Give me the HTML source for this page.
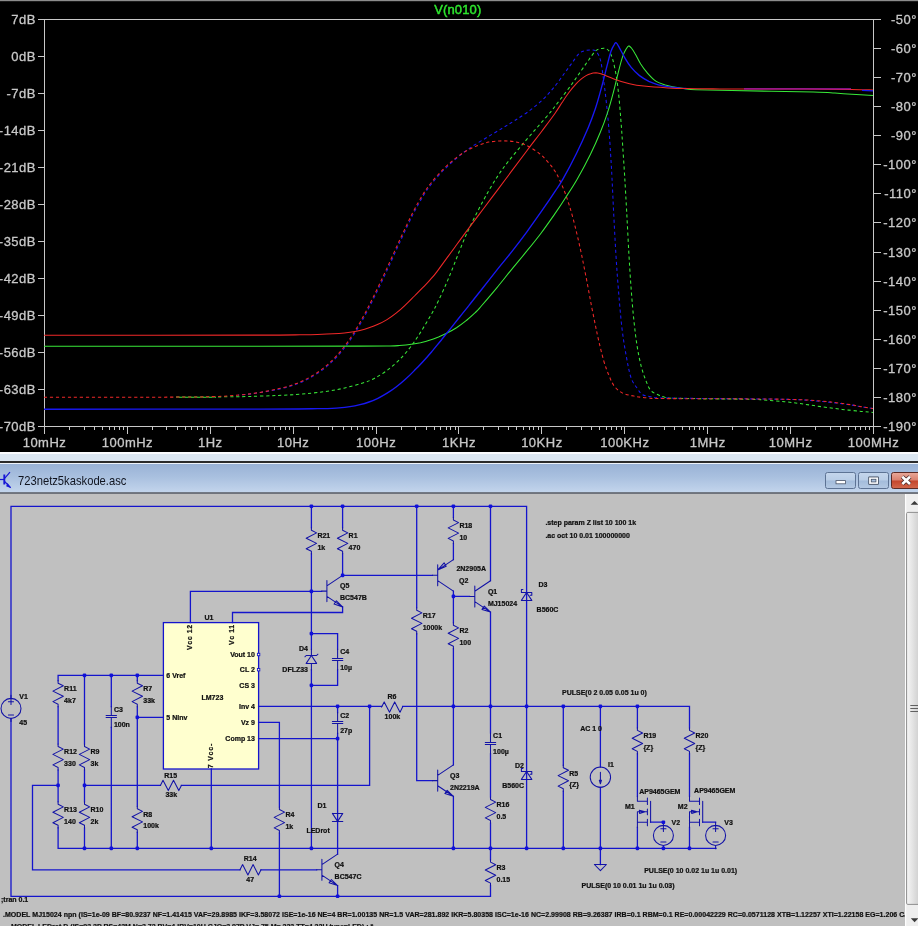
<!DOCTYPE html>
<html><head><meta charset="utf-8"><title>LTspice</title>
<style>html,body{margin:0;padding:0;background:#000;}body{width:918px;height:926px;overflow:hidden;font-family:"Liberation Sans", sans-serif;}svg{display:block;will-change:transform}</style></head>
<body>
<svg width="918" height="926" viewBox="0 0 918 926">
<rect x="0" y="0" width="918" height="452" fill="#000"/>
<rect x="0" y="0" width="918" height="1.2" fill="#8c8c8c"/>
<g stroke="#c8c8c8" stroke-width="1" fill="none" shape-rendering="crispEdges">
<path d="M38 19.5 H881"/>
<path d="M44.5 19.5 V426.5"/>
<path d="M873.5 19.5 V426.5"/>
<path d="M38 426.5 H881"/>
<path d="M38 19.5 H44.5"/>
<path d="M38 56.5 H44.5"/>
<path d="M38 93.5 H44.5"/>
<path d="M38 130.5 H44.5"/>
<path d="M38 167.5 H44.5"/>
<path d="M38 204.5 H44.5"/>
<path d="M38 241.5 H44.5"/>
<path d="M38 278.5 H44.5"/>
<path d="M38 315.5 H44.5"/>
<path d="M38 352.5 H44.5"/>
<path d="M38 389.5 H44.5"/>
<path d="M38 426.5 H44.5"/>
<path d="M873.5 19.5 H881"/>
<path d="M873.5 48.5 H881"/>
<path d="M873.5 77.5 H881"/>
<path d="M873.5 106.5 H881"/>
<path d="M873.5 135.5 H881"/>
<path d="M873.5 164.5 H881"/>
<path d="M873.5 193.5 H881"/>
<path d="M873.5 222.5 H881"/>
<path d="M873.5 252.5 H881"/>
<path d="M873.5 281.5 H881"/>
<path d="M873.5 310.5 H881"/>
<path d="M873.5 339.5 H881"/>
<path d="M873.5 368.5 H881"/>
<path d="M873.5 397.5 H881"/>
<path d="M873.5 426.5 H881"/>
<path d="M44.5 426.5 V433.5"/>
<path d="M69.5 426.5 V429.5"/>
<path d="M84.5 426.5 V429.5"/>
<path d="M94.5 426.5 V429.5"/>
<path d="M102.5 426.5 V429.5"/>
<path d="M109.5 426.5 V429.5"/>
<path d="M114.5 426.5 V429.5"/>
<path d="M119.5 426.5 V429.5"/>
<path d="M123.5 426.5 V429.5"/>
<path d="M127.5 426.5 V433.5"/>
<path d="M152.5 426.5 V429.5"/>
<path d="M166.5 426.5 V429.5"/>
<path d="M177.5 426.5 V429.5"/>
<path d="M185.5 426.5 V429.5"/>
<path d="M191.5 426.5 V429.5"/>
<path d="M197.5 426.5 V429.5"/>
<path d="M202.5 426.5 V429.5"/>
<path d="M206.5 426.5 V429.5"/>
<path d="M210.5 426.5 V433.5"/>
<path d="M235.5 426.5 V429.5"/>
<path d="M249.5 426.5 V429.5"/>
<path d="M260.5 426.5 V429.5"/>
<path d="M268.5 426.5 V429.5"/>
<path d="M274.5 426.5 V429.5"/>
<path d="M280.5 426.5 V429.5"/>
<path d="M285.5 426.5 V429.5"/>
<path d="M289.5 426.5 V429.5"/>
<path d="M293.5 426.5 V433.5"/>
<path d="M318.5 426.5 V429.5"/>
<path d="M332.5 426.5 V429.5"/>
<path d="M343.5 426.5 V429.5"/>
<path d="M351.5 426.5 V429.5"/>
<path d="M357.5 426.5 V429.5"/>
<path d="M363.5 426.5 V429.5"/>
<path d="M368.5 426.5 V429.5"/>
<path d="M372.5 426.5 V429.5"/>
<path d="M376.5 426.5 V433.5"/>
<path d="M401.5 426.5 V429.5"/>
<path d="M415.5 426.5 V429.5"/>
<path d="M426.5 426.5 V429.5"/>
<path d="M434.5 426.5 V429.5"/>
<path d="M440.5 426.5 V429.5"/>
<path d="M446.5 426.5 V429.5"/>
<path d="M450.5 426.5 V429.5"/>
<path d="M455.5 426.5 V429.5"/>
<path d="M458.5 426.5 V433.5"/>
<path d="M483.5 426.5 V429.5"/>
<path d="M498.5 426.5 V429.5"/>
<path d="M508.5 426.5 V429.5"/>
<path d="M516.5 426.5 V429.5"/>
<path d="M523.5 426.5 V429.5"/>
<path d="M529.5 426.5 V429.5"/>
<path d="M533.5 426.5 V429.5"/>
<path d="M538.5 426.5 V429.5"/>
<path d="M541.5 426.5 V433.5"/>
<path d="M566.5 426.5 V429.5"/>
<path d="M581.5 426.5 V429.5"/>
<path d="M591.5 426.5 V429.5"/>
<path d="M599.5 426.5 V429.5"/>
<path d="M606.5 426.5 V429.5"/>
<path d="M611.5 426.5 V429.5"/>
<path d="M616.5 426.5 V429.5"/>
<path d="M621.5 426.5 V429.5"/>
<path d="M624.5 426.5 V433.5"/>
<path d="M649.5 426.5 V429.5"/>
<path d="M664.5 426.5 V429.5"/>
<path d="M674.5 426.5 V429.5"/>
<path d="M682.5 426.5 V429.5"/>
<path d="M689.5 426.5 V429.5"/>
<path d="M694.5 426.5 V429.5"/>
<path d="M699.5 426.5 V429.5"/>
<path d="M703.5 426.5 V429.5"/>
<path d="M707.5 426.5 V433.5"/>
<path d="M732.5 426.5 V429.5"/>
<path d="M747.5 426.5 V429.5"/>
<path d="M757.5 426.5 V429.5"/>
<path d="M765.5 426.5 V429.5"/>
<path d="M772.5 426.5 V429.5"/>
<path d="M777.5 426.5 V429.5"/>
<path d="M782.5 426.5 V429.5"/>
<path d="M786.5 426.5 V429.5"/>
<path d="M790.5 426.5 V433.5"/>
<path d="M815.5 426.5 V429.5"/>
<path d="M830.5 426.5 V429.5"/>
<path d="M840.5 426.5 V429.5"/>
<path d="M848.5 426.5 V429.5"/>
<path d="M855.5 426.5 V429.5"/>
<path d="M860.5 426.5 V429.5"/>
<path d="M865.5 426.5 V429.5"/>
<path d="M869.5 426.5 V429.5"/>
<path d="M873.5 426.5 V433.5"/>
</g>
<g font-family='"Liberation Sans", sans-serif' font-size="13px" fill="#c8c8c8" stroke="#c8c8c8" stroke-width="0.3" letter-spacing="0.5" opacity="0.999">
<text x="36" y="24.2" text-anchor="end">7dB</text>
<text x="36" y="61.2" text-anchor="end">0dB</text>
<text x="36" y="98.2" text-anchor="end">-7dB</text>
<text x="36" y="135.2" text-anchor="end">-14dB</text>
<text x="36" y="172.2" text-anchor="end">-21dB</text>
<text x="36" y="209.2" text-anchor="end">-28dB</text>
<text x="36" y="246.2" text-anchor="end">-35dB</text>
<text x="36" y="283.2" text-anchor="end">-42dB</text>
<text x="36" y="320.2" text-anchor="end">-49dB</text>
<text x="36" y="357.2" text-anchor="end">-56dB</text>
<text x="36" y="394.2" text-anchor="end">-63dB</text>
<text x="36" y="431.2" text-anchor="end">-70dB</text>
<text x="917" y="24.2" text-anchor="end">-50&#176;</text>
<text x="917" y="53.2" text-anchor="end">-60&#176;</text>
<text x="917" y="82.2" text-anchor="end">-70&#176;</text>
<text x="917" y="111.2" text-anchor="end">-80&#176;</text>
<text x="917" y="140.2" text-anchor="end">-90&#176;</text>
<text x="917" y="169.2" text-anchor="end">-100&#176;</text>
<text x="917" y="198.2" text-anchor="end">-110&#176;</text>
<text x="917" y="227.2" text-anchor="end">-120&#176;</text>
<text x="917" y="257.2" text-anchor="end">-130&#176;</text>
<text x="917" y="286.2" text-anchor="end">-140&#176;</text>
<text x="917" y="315.2" text-anchor="end">-150&#176;</text>
<text x="917" y="344.2" text-anchor="end">-160&#176;</text>
<text x="917" y="373.2" text-anchor="end">-170&#176;</text>
<text x="917" y="402.2" text-anchor="end">-180&#176;</text>
<text x="917" y="431.2" text-anchor="end">-190&#176;</text>
<text x="44.5" y="446.6" text-anchor="middle">10mHz</text>
<text x="127.4" y="446.6" text-anchor="middle">100mHz</text>
<text x="210.3" y="446.6" text-anchor="middle">1Hz</text>
<text x="293.2" y="446.6" text-anchor="middle">10Hz</text>
<text x="376.1" y="446.6" text-anchor="middle">100Hz</text>
<text x="459.0" y="446.6" text-anchor="middle">1KHz</text>
<text x="541.9" y="446.6" text-anchor="middle">10KHz</text>
<text x="624.8" y="446.6" text-anchor="middle">100KHz</text>
<text x="707.7" y="446.6" text-anchor="middle">1MHz</text>
<text x="790.6" y="446.6" text-anchor="middle">10MHz</text>
<text x="873.5" y="446.6" text-anchor="middle">100MHz</text>
</g>
<text x="457.8" y="13.8" text-anchor="middle" font-family='"Liberation Sans", sans-serif' font-size="13px" fill="#2ee62e" stroke="#2ee62e" stroke-width="0.45" letter-spacing="0.12" opacity="0.999">V(n010)</text>
<g fill="none" stroke-width="1.05" stroke-linejoin="round">
<defs><clipPath id="cg"><rect x="175" y="0" width="743" height="452"/></clipPath><clipPath id="cb"><rect x="238" y="0" width="680" height="452"/></clipPath></defs>
<path d="M44.0 397.3C72.5 397.2 179.0 397.1 215.0 396.9C251.0 396.7 246.5 396.5 260.0 396.1C273.5 395.7 285.2 395.2 296.0 394.5C306.7 393.7 316.6 392.7 324.6 391.6C332.6 390.6 337.4 389.6 343.8 388.2C350.2 386.7 357.7 384.7 362.8 383.0C368.0 381.4 370.7 380.3 374.7 378.2C378.7 376.1 382.9 373.5 386.9 370.5C390.9 367.5 395.0 364.1 398.8 360.4C402.5 356.7 406.4 352.3 409.4 348.4C412.5 344.6 414.7 341.2 417.3 337.3C419.9 333.5 422.4 329.4 424.9 325.2C427.4 321.1 430.1 316.5 432.4 312.4C434.6 308.4 436.0 305.8 438.3 301.1C440.6 296.3 443.9 289.0 446.1 284.0C448.3 279.0 448.7 277.9 451.5 271.1C454.2 264.3 459.6 250.4 462.6 243.2C465.6 235.9 466.8 233.3 469.6 227.5C472.3 221.7 476.0 214.5 479.2 208.3C482.4 202.1 485.7 196.0 488.9 190.5C492.1 184.9 495.3 179.7 498.5 174.9C501.7 170.1 504.1 166.8 508.0 161.8C512.0 156.7 517.4 150.4 522.2 144.7C526.9 139.1 531.9 133.5 536.6 128.1C541.3 122.6 547.0 116.3 550.5 112.1C554.0 107.9 554.2 107.4 557.7 102.8C561.2 98.2 567.6 89.9 571.6 84.5C575.5 79.0 578.6 74.4 581.5 70.3C584.4 66.2 586.5 62.9 588.9 59.7C591.3 56.4 593.7 52.6 595.9 50.7C598.1 48.8 600.2 48.8 602.0 48.4C603.7 48.1 605.0 48.3 606.2 48.8C607.5 49.4 608.3 49.7 609.5 51.7C610.6 53.7 612.0 56.6 613.1 60.9C614.3 65.2 615.6 71.6 616.5 77.6C617.5 83.5 618.1 89.5 618.9 96.7C619.6 103.9 620.3 112.6 620.9 120.6C621.6 128.6 622.0 135.5 622.6 144.6C623.2 153.7 623.9 163.8 624.6 175.0C625.2 186.3 626.0 198.9 626.7 212.1C627.4 225.3 628.2 241.1 628.9 254.2C629.7 267.3 630.4 279.4 631.3 290.6C632.1 301.8 633.0 312.1 634.0 321.5C635.0 330.8 636.0 339.2 637.2 346.7C638.4 354.2 639.8 360.7 641.2 366.3C642.7 371.9 644.1 376.1 645.7 380.1C647.3 384.1 648.6 387.9 650.6 390.3C652.6 392.7 655.6 393.6 658.0 394.8C660.3 395.9 661.9 396.6 664.8 397.2C667.8 397.7 661.7 397.9 675.9 398.3C690.1 398.6 735.5 399.0 750.0 399.3C764.5 399.6 757.2 399.5 763.0 399.9C768.8 400.3 777.8 401.0 784.6 401.7C791.4 402.4 797.4 403.2 803.8 404.1C810.2 405.0 816.6 406.0 823.0 406.9C829.4 407.8 835.7 408.6 842.1 409.4C848.5 410.1 856.2 410.9 861.3 411.4C866.5 411.9 871.1 412.3 873.0 412.5" stroke="#38e838" stroke-dasharray="3.2 2.8" clip-path="url(#cg)"/>
<path d="M176 397.3H216" stroke="#38e838" stroke-dasharray="3.2 2.8" stroke-dashoffset="3"/>
<path d="M700 398.8H741" stroke="#38e838" stroke-dasharray="3.2 2.8" stroke-dashoffset="3"/>
<path d="M44.0 397.3C65.8 397.3 146.5 397.3 175.0 397.1C203.5 397.0 204.1 396.9 215.0 396.5C225.8 396.2 232.5 395.7 240.0 395.0C247.6 394.4 253.8 393.6 260.4 392.5C267.1 391.5 273.9 390.3 280.0 388.9C286.0 387.5 291.6 386.0 296.7 384.0C301.9 382.1 306.2 380.1 310.9 377.4C315.7 374.7 320.8 371.3 325.2 367.8C329.5 364.3 333.2 360.9 337.2 356.5C341.2 352.2 345.1 347.4 349.1 341.8C353.1 336.1 357.0 329.8 361.0 322.7C365.1 315.6 369.2 307.6 373.4 299.0C377.7 290.5 382.0 281.3 386.6 271.4C391.2 261.5 396.5 249.4 401.0 239.7C405.5 230.1 409.6 221.1 413.4 213.6C417.3 206.0 421.0 199.6 424.1 194.5C427.3 189.3 429.2 186.7 432.6 182.6C435.9 178.4 440.4 173.4 444.4 169.4C448.3 165.4 452.7 161.5 456.2 158.5C459.7 155.4 462.4 153.4 465.4 151.1C468.5 148.9 470.8 147.4 474.6 144.9C478.5 142.5 483.9 139.2 488.6 136.4C493.3 133.5 498.6 130.5 502.9 127.9C507.2 125.2 510.2 123.4 514.5 120.7C518.7 118.0 523.6 115.1 528.3 111.6C533.0 108.1 538.2 103.9 542.6 99.8C546.9 95.6 550.8 91.2 554.5 86.7C558.3 82.2 561.9 76.7 564.8 72.8C567.7 68.9 569.5 66.3 571.9 63.1C574.3 59.9 576.9 55.6 579.1 53.5C581.3 51.4 583.3 51.3 585.3 50.7C587.3 50.1 589.2 49.9 591.0 50.0C592.8 50.1 594.3 49.4 595.9 51.2C597.5 53.0 599.3 55.5 600.6 60.7C601.9 65.9 602.9 75.1 603.9 82.3C604.9 89.5 605.7 96.3 606.5 103.9C607.3 111.5 608.1 119.4 608.8 127.8C609.5 136.2 610.1 145.8 610.6 154.2C611.2 162.6 611.5 168.6 612.0 178.2C612.5 187.9 613.0 199.4 613.6 212.1C614.3 224.8 615.1 241.1 615.9 254.2C616.7 267.3 617.5 278.5 618.5 290.6C619.5 302.7 620.6 316.3 621.8 327.0C623.1 337.8 624.5 346.6 626.1 355.1C627.6 363.5 629.1 372.0 631.0 377.6C632.9 383.2 635.4 385.6 637.3 388.4C639.1 391.3 640.0 393.1 642.2 394.5C644.4 395.9 647.0 396.1 650.7 396.7C654.5 397.3 646.5 397.7 664.7 398.0C683.0 398.4 739.2 398.7 760.0 399.0C780.8 399.2 781.3 399.2 789.4 399.4C797.5 399.6 801.4 399.8 808.6 400.3C815.8 400.9 825.3 401.8 832.5 402.6C839.7 403.4 846.8 404.4 851.6 405.1C856.4 405.8 857.8 406.2 861.4 406.8C864.9 407.4 871.1 408.2 873.0 408.5" stroke="#1818f4" stroke-dasharray="3.2 2.8" clip-path="url(#cb)"/>
<path d="M44.0 397.3C65.8 397.3 146.5 397.3 175.0 397.1C203.5 397.0 204.2 396.9 215.0 396.5C225.8 396.2 232.5 395.7 240.0 395.0C247.4 394.3 253.4 393.5 260.0 392.4C266.5 391.3 273.1 390.1 279.1 388.6C285.1 387.2 290.6 385.7 295.7 383.7C300.9 381.8 305.2 379.8 309.9 377.1C314.7 374.4 319.8 371.0 324.2 367.5C328.5 364.0 332.2 360.6 336.2 356.2C340.2 351.9 344.1 347.1 348.1 341.5C352.1 335.8 356.0 329.5 360.0 322.4C364.1 315.3 368.2 307.3 372.4 298.7C376.7 290.2 381.0 281.0 385.6 271.1C390.2 261.2 395.5 249.1 400.0 239.4C404.5 229.8 408.6 220.8 412.4 213.3C416.3 205.7 420.0 199.3 423.1 194.2C426.3 189.0 428.2 186.4 431.6 182.3C434.9 178.1 439.4 173.1 443.4 169.1C447.3 165.1 451.4 161.5 455.4 158.4C459.4 155.2 463.5 152.5 467.4 150.3C471.4 148.0 475.5 146.3 479.1 145.0C482.7 143.6 485.3 142.8 488.7 142.1C492.2 141.5 496.5 141.1 500.0 140.9C503.5 140.8 507.1 140.9 510.0 141.1C512.8 141.3 514.9 141.7 517.2 142.2C519.5 142.7 521.9 143.5 523.9 144.3C525.9 145.1 527.2 145.7 529.2 146.8C531.2 147.9 533.8 149.5 535.8 150.9C537.8 152.2 539.5 153.6 541.1 155.0C542.7 156.4 543.8 157.4 545.4 159.1C547.0 160.8 549.2 163.4 550.8 165.3C552.3 167.2 553.3 168.5 554.7 170.8C556.1 173.1 557.3 174.9 559.2 179.0C561.1 183.1 563.7 189.0 566.0 195.5C568.3 202.0 570.5 209.0 572.9 217.9C575.3 226.7 578.1 238.9 580.3 248.7C582.4 258.4 584.0 266.8 586.0 276.6C587.9 286.4 589.9 297.7 591.8 307.5C593.8 317.3 595.6 326.6 597.5 335.4C599.5 344.3 601.8 353.8 603.7 360.6C605.6 367.3 607.4 371.7 609.2 375.9C610.9 380.2 612.0 383.1 614.2 386.0C616.4 388.9 619.3 391.4 622.6 393.1C625.9 394.8 629.7 395.3 633.9 396.1C638.1 396.9 642.7 397.5 647.8 397.9C653.0 398.4 646.0 398.4 664.7 398.6C683.4 398.7 739.2 398.8 760.0 399.0C780.8 399.1 781.3 399.2 789.4 399.4C797.5 399.6 802.2 399.8 808.6 400.1C815.0 400.5 823.7 401.2 827.7 401.5C831.6 401.9 828.5 401.6 832.5 402.2C836.5 402.7 846.8 404.1 851.6 404.8C856.4 405.6 857.8 406.1 861.4 406.7C864.9 407.3 871.1 408.2 873.0 408.5" stroke="#f02828" stroke-dasharray="3.2 2.8"/>
<path d="M44.0 346.2C80.0 346.2 207.3 346.2 260.0 346.2C312.7 346.1 338.3 346.1 360.0 346.1C381.7 346.0 383.4 346.0 390.0 345.9C396.5 345.8 395.7 345.8 399.3 345.5C402.8 345.2 407.8 344.7 411.4 344.2C414.9 343.7 417.4 343.3 420.5 342.7C423.5 342.0 426.4 341.3 429.4 340.3C432.4 339.4 435.5 338.2 438.5 337.0C441.5 335.7 444.6 334.3 447.6 332.8C450.6 331.3 453.5 329.7 456.5 327.8C459.5 325.8 462.4 323.7 465.5 321.2C468.6 318.8 472.5 315.1 474.9 312.9C477.2 310.6 476.1 312.0 479.8 307.8C483.4 303.6 491.5 294.2 496.8 287.8C502.1 281.4 506.5 275.7 511.5 269.6C516.5 263.5 521.8 257.3 526.7 251.2C531.6 245.2 536.2 239.6 541.0 233.2C545.8 226.8 551.3 218.9 555.5 212.9C559.7 206.8 562.4 202.7 566.0 197.0C569.7 191.4 573.2 186.2 577.3 179.0C581.4 171.9 586.8 161.7 590.6 154.0C594.4 146.2 597.5 139.2 600.2 132.5C603.0 125.7 605.1 120.1 607.3 113.3C609.5 106.6 611.6 99.0 613.5 91.8C615.4 84.7 617.2 76.3 618.8 70.3C620.3 64.4 621.5 59.7 622.8 56.1C624.0 52.5 625.3 50.4 626.3 48.7C627.3 47.0 627.9 46.0 628.7 45.9C629.5 45.8 630.3 46.8 631.4 48.0C632.4 49.3 633.6 51.0 635.1 53.7C636.7 56.3 638.8 60.9 640.7 64.0C642.7 67.1 644.2 69.4 646.7 72.2C649.3 75.1 652.7 79.0 655.8 81.1C658.9 83.2 662.6 83.9 665.4 84.9C668.2 85.8 669.5 86.2 672.6 86.8C675.7 87.4 680.1 88.2 684.0 88.6C687.9 89.1 688.1 89.4 696.0 89.7C704.0 90.0 712.3 90.2 731.9 90.6C751.5 91.0 796.2 91.6 813.4 92.0C830.5 92.4 828.5 92.7 834.9 93.1C841.3 93.5 845.4 93.8 851.7 94.2C858.1 94.6 869.5 95.3 873.0 95.5" stroke="#38e838"/>
<path d="M44.0 409.2C80.0 409.2 214.4 409.2 260.0 409.1C305.6 409.0 304.3 408.9 317.5 408.7C330.7 408.5 333.6 408.2 339.0 407.9C344.4 407.5 346.5 407.2 350.0 406.6C353.5 406.1 356.8 405.4 360.0 404.6C363.1 403.9 366.0 403.1 369.0 402.0C372.0 401.0 374.9 399.8 377.9 398.3C381.0 396.8 384.0 395.1 387.1 393.2C390.1 391.3 393.1 389.3 396.1 387.0C399.1 384.7 402.1 382.2 405.1 379.5C408.2 376.8 411.3 373.7 414.3 370.6C417.4 367.6 420.3 364.5 423.3 361.2C426.3 358.0 429.3 354.5 432.4 350.9C435.4 347.3 438.5 343.4 441.6 339.7C444.6 335.9 447.7 332.2 450.7 328.4C453.7 324.6 456.7 320.8 459.7 317.0C462.7 313.2 465.4 309.9 468.8 305.7C472.1 301.4 475.2 297.5 480.0 291.5C484.7 285.5 491.9 276.3 497.2 269.6C502.6 262.9 507.3 257.4 512.2 251.2C517.1 244.9 521.9 238.6 526.7 232.1C531.5 225.5 536.3 218.7 541.2 211.7C546.0 204.8 552.1 195.8 555.7 190.3C559.4 184.9 559.5 185.1 562.9 179.1C566.4 173.0 572.0 162.6 576.2 154.0C580.5 145.4 585.1 135.2 588.3 127.6C591.4 120.0 593.1 115.3 595.4 108.5C597.6 101.8 599.8 93.8 601.6 87.1C603.5 80.3 605.0 73.8 606.5 67.9C608.1 61.9 609.6 55.4 610.9 51.5C612.2 47.6 613.4 45.9 614.3 44.5C615.2 43.0 615.3 42.2 616.2 42.8C617.1 43.4 618.0 45.3 619.4 47.8C620.9 50.4 623.0 54.8 625.0 58.1C626.9 61.4 628.8 64.5 631.2 67.4C633.6 70.3 636.6 73.3 639.5 75.6C642.5 77.9 645.7 79.7 648.8 81.3C652.0 82.8 655.2 83.9 658.3 84.8C661.5 85.7 664.1 86.2 667.8 86.7C671.4 87.3 676.8 87.7 680.0 88.1C683.2 88.4 685.8 88.5 687.0 88.6" stroke="#1818f4" stroke-width="1.35"/>
<path d="M44.0 335.3C80.0 335.3 217.3 335.2 260.0 335.1C302.7 335.0 290.4 334.9 300.0 334.8C309.6 334.7 311.0 334.7 317.5 334.5C324.0 334.2 333.6 333.7 339.0 333.4C344.4 333.0 346.5 332.7 350.0 332.2C353.5 331.7 356.8 331.1 359.9 330.4C363.1 329.7 366.0 328.9 369.0 327.8C372.0 326.8 375.0 325.7 378.0 324.3C381.0 323.0 383.9 321.5 387.0 319.6C390.0 317.8 393.1 315.6 396.1 313.2C399.1 310.9 402.0 308.3 405.0 305.4C408.1 302.6 411.4 299.1 414.5 296.0C417.5 292.9 420.9 289.5 423.5 286.8C426.1 284.1 427.9 282.4 430.1 279.8C432.4 277.3 432.8 277.2 437.0 271.6C441.1 266.1 449.7 254.1 455.2 246.7C460.6 239.3 464.6 233.8 469.4 227.4C474.2 221.0 479.0 214.6 483.8 208.2C488.6 201.8 493.4 195.5 498.2 189.1C503.0 182.7 507.7 176.3 512.5 169.9C517.3 163.5 522.1 157.1 526.9 150.7C531.7 144.3 536.7 137.9 541.4 131.7C546.1 125.4 551.6 118.2 555.1 113.2C558.6 108.2 560.2 105.2 562.6 101.7C564.9 98.1 567.0 95.0 569.3 92.0C571.5 89.0 574.2 85.9 576.3 83.6C578.3 81.4 580.0 80.0 581.7 78.6C583.3 77.3 584.7 76.4 586.1 75.6C587.6 74.7 589.0 74.1 590.6 73.7C592.2 73.2 594.3 72.9 595.9 72.8C597.4 72.8 598.7 73.1 599.9 73.4C601.1 73.7 600.5 73.6 603.0 74.6C605.5 75.6 610.7 77.9 615.2 79.4C619.6 81.0 624.7 82.6 629.5 83.7C634.3 84.8 637.5 85.4 643.9 86.1C650.2 86.8 660.5 87.5 667.7 87.9C674.9 88.3 678.2 88.4 686.9 88.6C695.6 88.8 700.5 88.8 720.0 88.9C739.5 88.9 781.9 88.9 803.8 89.0C825.7 89.1 840.2 89.3 851.7 89.4C863.2 89.6 869.4 89.9 873.0 90.0" stroke="#f02828"/>
<path d="M862 90.3L873 90.8" stroke="#1818f4" stroke-width="1.3"/>
<path d="M744 88.9H851" stroke="#a018b0" stroke-width="1.3"/>
</g>
<rect x="0" y="452" width="918" height="2" fill="#fbfcfe"/>
<rect x="0" y="454" width="918" height="7" fill="#dce7f2"/>
<rect x="0" y="461" width="918" height="2" fill="#2b2b2b"/>
<rect x="0" y="463" width="918" height="1" fill="#eef3fa"/>
<defs><linearGradient id="tb" x1="0" y1="0" x2="0" y2="1"><stop offset="0" stop-color="#99b2d6"/><stop offset="0.45" stop-color="#a9c0df"/><stop offset="1" stop-color="#c3d5ec"/></linearGradient></defs>
<rect x="0" y="464" width="918" height="28.6" fill="url(#tb)"/>
<rect x="0" y="492.5" width="918" height="1.5" fill="#6f737b"/>
<rect x="0" y="494" width="918" height="432" fill="#c0c0c0"/>
<rect x="163.4" y="622.6" width="95.2" height="146.4" fill="#ffffcf" stroke="#1414cc" stroke-width="1.3"/>
<rect x="257.4" y="653.3" width="2.4" height="2.4" fill="#ffffcf" stroke="#1414cc" stroke-width="0.9"/>
<rect x="257.4" y="668.5" width="2.4" height="2.4" fill="#ffffcf" stroke="#1414cc" stroke-width="0.9"/>
<g fill="none" stroke="#1414cc" stroke-width="1.3" stroke-linecap="square" stroke-linejoin="miter">
<path d="M11.0 698.4L11.0 506.3L526.6 506.3M11.0 718.4L11.0 896.3L490.5 896.3M311.4 506.3L311.4 527.7M311.4 553.9L311.4 649.0M311.4 670.0L311.4 848.4M311.4 633.6L337.6 633.6L337.6 649.0M337.6 670.0L337.6 685.4L311.4 685.4M342.6 506.3L342.6 527.7M342.6 553.9L342.6 575.4M190.4 622.6L190.4 591.4L321.6 591.4M232.5 622.6L232.5 612.5L342.6 612.5L342.6 606.9M342.6 575.4L432.4 575.4M416.7 506.3L416.7 607.7M416.7 633.9L416.7 780.6L432.4 780.6M453.4 506.3L453.4 517.4M453.4 543.6L453.4 559.6M453.4 591.1L453.4 622.7M453.4 648.9L453.4 764.9M453.4 796.3L453.4 848.4M453.4 596.4L469.5 596.4M490.5 506.3L490.5 580.7M490.5 612.1L490.5 733.0M490.5 754.0L490.5 796.9M490.5 823.1L490.5 859.5M490.5 885.7L490.5 896.3M526.6 506.3L526.6 848.4M258.6 706.4L381.6 706.4M402.6 706.4L689.5 706.4M337.6 706.4L337.6 712.5M337.6 733.5L337.6 813.4M258.6 738.6L337.6 738.6M337.6 813.4L337.6 854.1M337.6 885.6L337.6 896.3M258.6 722.4L279.4 722.4L279.4 806.9M279.4 833.1L279.4 896.3M84.5 785.4L160.4 785.4M181.4 785.4L369.6 785.4L369.6 706.4M58.1 785.4L32.5 785.4L32.5 869.8L240.0 869.8M261.0 869.8L316.6 869.8M58.1 675.4L163.4 675.4M58.1 675.4L58.1 680.6M58.1 706.8L58.1 743.9M58.1 770.1L58.1 801.7M58.1 827.9L58.1 848.4M84.5 675.4L84.5 743.9M84.5 770.1L84.5 801.7M84.5 827.9L84.5 848.4M111.3 675.4L111.3 706.5M111.3 727.5L111.3 848.4M137.3 675.4L137.3 680.6M137.3 706.8L137.3 806.2M137.3 832.4L137.3 848.4M137.3 717.4L163.4 717.4M211.3 769.0L211.3 848.4M58.1 848.4L716.0 848.4M563.3 706.4L563.3 765.1M563.3 791.3L563.3 848.4M600.4 706.4L600.4 767.0M600.4 787.4L600.4 864.5M637.4 706.4L637.4 727.8M637.4 754.0L637.4 796.0M637.4 827.5L637.4 848.4M650.6 822.2L663.4 822.2M689.5 706.4L689.5 727.8M689.5 754.0L689.5 796.0M689.5 827.5L689.5 848.4M702.7 822.2L715.6 822.2M715.6 848.5L715.6 848.4"/>
</g>
<g fill="none" stroke="#1212a6" stroke-width="1.05" stroke-linecap="round" stroke-linejoin="round">
<path d="M11.0 708.4 m-10.00 0 a10.00 10.00 0 1 0 20.01 0 a10.00 10.00 0 1 0 -20.01 0M11.0 695.3L11.0 698.4M11.0 718.4L11.0 721.5M8.4 701.8L13.6 701.8M11.0 699.2L11.0 704.5M8.4 715.0L13.6 715.0M311.4 527.7L311.4 530.3L316.6 532.9L306.2 538.2L316.6 543.4L306.2 548.7L311.4 551.3L311.4 553.9M306.2 663.4L316.6 663.4L311.4 655.5L306.2 663.4M304.9 656.8L306.2 655.5L316.6 655.5L317.9 654.2M311.4 649.0L311.4 655.5M311.4 663.4L311.4 670.0M337.6 649.0L337.6 658.5M337.6 660.5L337.6 670.0M332.4 658.5L342.8 658.5M332.4 660.5L342.8 660.5M342.6 527.7L342.6 530.3L347.8 532.9L337.4 538.2L347.8 543.4L337.4 548.7L342.6 551.3L342.6 553.9M326.9 580.6L326.9 601.6M321.6 591.1L326.9 591.1M326.9 585.9L342.6 575.4M326.9 596.4L342.6 606.9M342.6 606.9L336.4 600.8L334.1 604.1L342.6 606.9M416.7 607.7L416.7 610.3L421.9 612.9L411.5 618.2L421.9 623.4L411.5 628.7L416.7 631.3L416.7 633.9M453.4 517.4L453.4 520.0L458.6 522.6L448.2 527.9L458.6 533.1L448.2 538.4L453.4 541.0L453.4 543.6M437.7 585.8L437.7 564.8M432.4 575.3L437.7 575.3M437.7 580.6L453.4 591.1M437.7 570.1L453.4 559.6M437.7 570.1L446.2 566.2L444.1 562.9L437.7 570.1M453.4 622.7L453.4 625.3L458.6 627.9L448.2 633.2L458.6 638.4L448.2 643.7L453.4 646.3L453.4 648.9M437.7 770.1L437.7 791.1M432.4 780.6L437.7 780.6M437.7 775.4L453.4 764.9M437.7 785.8L453.4 796.3M453.4 796.3L447.2 790.3L444.9 793.6L453.4 796.3M474.8 585.9L474.8 606.9M469.5 596.4L474.8 596.4M474.8 591.2L490.5 580.7M474.8 601.6L490.5 612.1M490.5 612.1L484.3 606.1L482.0 609.4L490.5 612.1M490.5 733.0L490.5 742.5M490.5 744.5L490.5 754.0M485.3 742.5L495.7 742.5M485.3 744.5L495.7 744.5M490.5 796.9L490.5 799.5L495.7 802.1L485.3 807.4L495.7 812.6L485.3 817.9L490.5 820.5L490.5 823.1M490.5 859.5L490.5 862.1L495.7 864.7L485.3 870.0L495.7 875.2L485.3 880.5L490.5 883.1L490.5 885.7M521.4 600.4L531.8 600.4L526.6 592.5L521.4 600.4M522.9 589.5L521.4 589.5L521.4 592.5L531.8 592.5L531.8 595.3L530.2 595.3M521.4 779.4L531.8 779.4L526.6 771.5L521.4 779.4M522.9 768.5L521.4 768.5L521.4 771.5L531.8 771.5L531.8 774.3L530.2 774.3M381.6 707.1L384.2 701.9L389.5 712.3L394.7 701.9L400.0 712.3L402.6 707.1M337.6 712.5L337.6 721.5M337.6 723.5L337.6 733.5M332.4 721.5L342.8 721.5M332.4 723.5L342.8 723.5M332.4 813.4L342.8 813.4L337.6 821.4L332.4 813.4M332.4 821.4L342.8 821.4M321.9 859.3L321.9 880.3M316.6 869.8L321.9 869.8M321.9 864.6L337.6 854.1M321.9 875.1L337.6 885.6M337.6 885.6L331.4 879.5L329.1 882.8L337.6 885.6M279.4 806.9L279.4 809.5L284.6 812.1L274.2 817.4L284.6 822.6L274.2 827.9L279.4 830.5L279.4 833.1M160.4 785.4L163.0 780.2L168.3 790.6L173.5 780.2L178.8 790.6L181.4 785.4M240.0 869.8L242.6 864.6L247.9 875.0L253.1 864.6L258.4 875.0L261.0 869.8M58.1 680.6L58.1 683.2L63.3 685.8L52.9 691.1L63.3 696.3L52.9 701.6L58.1 704.2L58.1 706.8M58.1 743.9L58.1 746.5L63.3 749.1L52.9 754.4L63.3 759.6L52.9 764.9L58.1 767.5L58.1 770.1M58.1 801.7L58.1 804.3L63.3 806.9L52.9 812.2L63.3 817.4L52.9 822.7L58.1 825.3L58.1 827.9M84.5 743.9L84.5 746.5L89.7 749.1L79.3 754.4L89.7 759.6L79.3 764.9L84.5 767.5L84.5 770.1M84.5 801.7L84.5 804.3L89.7 806.9L79.3 812.2L89.7 817.4L79.3 822.7L84.5 825.3L84.5 827.9M111.3 706.5L111.3 715.5M111.3 717.5L111.3 727.5M106.1 715.5L116.5 715.5M106.1 717.5L116.5 717.5M137.3 680.6L137.3 683.2L142.5 685.8L132.1 691.1L142.5 696.3L132.1 701.6L137.3 704.2L137.3 706.8M137.3 806.2L137.3 808.8L142.5 811.4L132.1 816.7L142.5 821.9L132.1 827.2L137.3 829.8L137.3 832.4M563.3 765.1L563.3 767.7L568.5 770.3L558.1 775.6L568.5 780.8L558.1 786.1L563.3 788.7L563.3 791.3M600.4 777.2 m-10.17 0 a10.17 10.17 0 1 0 20.34 0 a10.17 10.17 0 1 0 -20.34 0M600.4 772.2L600.4 783.6M599.3 780.2L600.4 783.8L601.5 780.2L599.3 780.2M594.4 864.5L606.4 864.5L600.4 870.6L594.4 864.5M637.4 727.8L637.4 730.4L642.6 733.0L632.2 738.3L642.6 743.5L632.2 748.8L637.4 751.4L637.4 754.0M637.4 796.0L637.4 801.2L647.4 801.2M647.4 798.0L647.4 804.5M647.4 809.1L647.4 814.7M647.4 819.3L647.4 825.8M650.6 801.2L650.6 822.2M637.4 811.7L637.4 827.5M637.4 822.2L647.4 822.2M637.4 811.7L647.4 811.7M645.0 811.7L639.4 810.2L639.6 813.5L645.0 811.7M663.4 835.4 m-10.00 0 a10.00 10.00 0 1 0 20.01 0 a10.00 10.00 0 1 0 -20.01 0M663.4 822.2L663.4 825.4M663.4 845.4L663.4 848.5M660.8 828.8L666.0 828.8M663.4 826.2L663.4 831.4M660.8 841.9L666.0 841.9M689.5 727.8L689.5 730.4L694.7 733.0L684.3 738.3L694.7 743.5L684.3 748.8L689.5 751.4L689.5 754.0M689.5 796.0L689.5 801.2L699.5 801.2M699.5 798.0L699.5 804.5M699.5 809.1L699.5 814.7M699.5 819.3L699.5 825.8M702.7 801.2L702.7 822.2M689.5 811.7L689.5 827.5M689.5 822.2L699.5 822.2M689.5 811.7L699.5 811.7M697.1 811.7L691.5 810.2L691.7 813.5L697.1 811.7M715.6 835.4 m-10.00 0 a10.00 10.00 0 1 0 20.01 0 a10.00 10.00 0 1 0 -20.01 0M715.6 822.2L715.6 825.4M715.6 845.4L715.6 848.5M713.0 828.8L718.2 828.8M715.6 826.2L715.6 831.4M713.0 841.9L718.2 841.9"/>
</g>
<g fill="#1010d8">
<rect x="309.6" y="631.8" width="3.6" height="3.6" rx="1.1"/>
<rect x="309.6" y="683.6" width="3.6" height="3.6" rx="1.1"/>
<rect x="309.6" y="504.5" width="3.6" height="3.6" rx="1.1"/>
<rect x="309.6" y="589.6" width="3.6" height="3.6" rx="1.1"/>
<rect x="309.6" y="846.6" width="3.6" height="3.6" rx="1.1"/>
<rect x="340.8" y="504.5" width="3.6" height="3.6" rx="1.1"/>
<rect x="340.8" y="573.6" width="3.6" height="3.6" rx="1.1"/>
<rect x="414.9" y="504.5" width="3.6" height="3.6" rx="1.1"/>
<rect x="451.6" y="504.5" width="3.6" height="3.6" rx="1.1"/>
<rect x="451.6" y="594.6" width="3.6" height="3.6" rx="1.1"/>
<rect x="451.6" y="704.6" width="3.6" height="3.6" rx="1.1"/>
<rect x="451.6" y="846.6" width="3.6" height="3.6" rx="1.1"/>
<rect x="488.7" y="504.5" width="3.6" height="3.6" rx="1.1"/>
<rect x="488.7" y="704.6" width="3.6" height="3.6" rx="1.1"/>
<rect x="488.7" y="846.6" width="3.6" height="3.6" rx="1.1"/>
<rect x="524.8" y="704.6" width="3.6" height="3.6" rx="1.1"/>
<rect x="524.8" y="846.6" width="3.6" height="3.6" rx="1.1"/>
<rect x="335.8" y="704.6" width="3.6" height="3.6" rx="1.1"/>
<rect x="367.8" y="704.6" width="3.6" height="3.6" rx="1.1"/>
<rect x="335.8" y="736.8" width="3.6" height="3.6" rx="1.1"/>
<rect x="335.8" y="894.5" width="3.6" height="3.6" rx="1.1"/>
<rect x="277.6" y="894.5" width="3.6" height="3.6" rx="1.1"/>
<rect x="82.7" y="673.6" width="3.6" height="3.6" rx="1.1"/>
<rect x="109.5" y="673.6" width="3.6" height="3.6" rx="1.1"/>
<rect x="135.5" y="673.6" width="3.6" height="3.6" rx="1.1"/>
<rect x="56.3" y="783.6" width="3.6" height="3.6" rx="1.1"/>
<rect x="82.7" y="783.6" width="3.6" height="3.6" rx="1.1"/>
<rect x="82.7" y="846.6" width="3.6" height="3.6" rx="1.1"/>
<rect x="109.5" y="846.6" width="3.6" height="3.6" rx="1.1"/>
<rect x="135.5" y="715.6" width="3.6" height="3.6" rx="1.1"/>
<rect x="135.5" y="846.6" width="3.6" height="3.6" rx="1.1"/>
<rect x="209.5" y="846.6" width="3.6" height="3.6" rx="1.1"/>
<rect x="561.5" y="704.6" width="3.6" height="3.6" rx="1.1"/>
<rect x="561.5" y="846.6" width="3.6" height="3.6" rx="1.1"/>
<rect x="598.6" y="704.6" width="3.6" height="3.6" rx="1.1"/>
<rect x="598.6" y="846.6" width="3.6" height="3.6" rx="1.1"/>
<rect x="635.6" y="704.6" width="3.6" height="3.6" rx="1.1"/>
<rect x="635.6" y="846.6" width="3.6" height="3.6" rx="1.1"/>
<rect x="661.6" y="820.4" width="3.6" height="3.6" rx="1.1"/>
<rect x="661.6" y="846.6" width="3.6" height="3.6" rx="1.1"/>
<rect x="687.7" y="846.6" width="3.6" height="3.6" rx="1.1"/>
</g>
<g font-family='"Liberation Sans", sans-serif' font-weight="bold" font-size="7px" fill="#101010" stroke="#101010" stroke-width="0.22">
<text x="19.3" y="698.9">V1</text>
<text x="19.3" y="725.2">45</text>
<text x="317.4" y="538.1">R21</text>
<text x="317.4" y="549.9">1k</text>
<text x="308.0" y="651.3" text-anchor="end">D4</text>
<text x="308.0" y="672.0" text-anchor="end">DFLZ33</text>
<text x="340.2" y="654.1">C4</text>
<text x="340.2" y="669.9">10µ</text>
<text x="348.6" y="538.1">R1</text>
<text x="348.6" y="549.9">470</text>
<text x="340.0" y="588.4">Q5</text>
<text x="340.0" y="600.2">BC547B</text>
<text x="422.7" y="618.1">R17</text>
<text x="422.7" y="629.9">1000k</text>
<text x="459.4" y="527.8">R18</text>
<text x="459.4" y="539.6">10</text>
<text x="456.4" y="571.2">2N2905A</text>
<text x="459.0" y="583.1">Q2</text>
<text x="459.4" y="633.1">R2</text>
<text x="459.4" y="644.9">100</text>
<text x="450.0" y="777.9">Q3</text>
<text x="450.0" y="789.7">2N2219A</text>
<text x="487.9" y="593.7">Q1</text>
<text x="487.9" y="605.5">MJ15024</text>
<text x="493.1" y="738.1">C1</text>
<text x="493.1" y="753.9">100µ</text>
<text x="496.5" y="807.3">R16</text>
<text x="496.5" y="819.1">0.5</text>
<text x="496.5" y="869.9">R3</text>
<text x="496.5" y="881.7">0.15</text>
<text x="538.5" y="587.0">D3</text>
<text x="536.6" y="612.3">B560C</text>
<text x="524.0" y="767.7" text-anchor="end">D2</text>
<text x="524.0" y="788.3" text-anchor="end">B560C</text>
<text x="387.4" y="699.3">R6</text>
<text x="384.6" y="719.1">100k</text>
<text x="340.2" y="717.6">C2</text>
<text x="340.2" y="733.4">27p</text>
<text x="317.5" y="808.0">D1</text>
<text x="306.4" y="832.7">LEDrot</text>
<text x="334.6" y="867.1">Q4</text>
<text x="334.6" y="878.9">BC547C</text>
<text x="285.4" y="817.3">R4</text>
<text x="285.4" y="829.1">1k</text>
<text x="164.2" y="777.8">R15</text>
<text x="165.4" y="797.4">33k</text>
<text x="243.8" y="861.4">R14</text>
<text x="246.3" y="882.3">47</text>
<text x="64.1" y="691.0">R11</text>
<text x="64.1" y="702.8">4k7</text>
<text x="64.1" y="754.3">R12</text>
<text x="64.1" y="766.1">330</text>
<text x="64.1" y="812.1">R13</text>
<text x="64.1" y="823.9">140</text>
<text x="90.5" y="754.3">R9</text>
<text x="90.5" y="766.1">3k</text>
<text x="90.5" y="812.1">R10</text>
<text x="90.5" y="823.9">2k</text>
<text x="113.9" y="711.6">C3</text>
<text x="113.9" y="727.4">100n</text>
<text x="143.3" y="691.0">R7</text>
<text x="143.3" y="702.8">33k</text>
<text x="143.3" y="816.6">R8</text>
<text x="143.3" y="828.4">100k</text>
<text x="569.3" y="775.5">R5</text>
<text x="569.3" y="787.3">{Z}</text>
<text x="608.1" y="767.0">I1</text>
<text x="580.2" y="731.0">AC 1 0</text>
<text x="643.4" y="738.2">R19</text>
<text x="643.4" y="750.0">{Z}</text>
<text x="625.0" y="809.2">M1</text>
<text x="639.2" y="794.0">AP9465GEM</text>
<text x="671.5" y="825.2">V2</text>
<text x="695.5" y="738.2">R20</text>
<text x="695.5" y="750.0">{Z}</text>
<text x="677.8" y="809.2">M2</text>
<text x="694.1" y="793.1">AP9465GEM</text>
<text x="724.3" y="825.2">V3</text>
<text x="545.4" y="525.1">.step param Z list 10 100 1k</text>
<text x="545.4" y="538.1">.ac oct 10 0.01 100000000</text>
<text x="562.0" y="695.0">PULSE(0 2 0.05 0.05 1u 0)</text>
<text x="644.2" y="873.3">PULSE(0 10 0.02 1u 1u 0.01)</text>
<text x="581.6" y="888.1">PULSE(0 10 0.01 1u 1u 0.03)</text>
<text x="1.0" y="901.7">;tran 0.1</text>
<text x="204.5" y="619.9">U1</text>
<text x="254.9" y="657.0" text-anchor="end">Vout 10</text>
<text x="254.9" y="672.2" text-anchor="end">CL 2</text>
<text x="254.9" y="688.2" text-anchor="end">CS 3</text>
<text x="254.9" y="709.0" text-anchor="end">Inv 4</text>
<text x="254.9" y="725.1" text-anchor="end">Vz 9</text>
<text x="254.9" y="741.2" text-anchor="end">Comp 13</text>
<text x="166.3" y="678.2">6 Vref</text>
<text x="166.3" y="720.1">5 NInv</text>
<text x="201.5" y="700.3">LM723</text>
<text transform="translate(191.9 649.9) rotate(-90)" letter-spacing="0.55">Vcc 12</text>
<text transform="translate(233.9 644.9) rotate(-90)" letter-spacing="0.55">Vc 11</text>
<text transform="translate(212.6 768.3) rotate(-90)" letter-spacing="0.8">7 Vcc-</text>
<text x="3.0" y="917.0" letter-spacing="0.032">.MODEL MJ15024 npn (IS=1e-09 BF=80.9237 NF=1.41415 VAF=29.8985 IKF=3.58072 ISE=1e-16 NE=4 BR=1.00135 NR=1.5 VAR=281.892 IKR=5.80358 ISC=1e-16 NC=2.99908 RB=9.26387 IRB=0.1 RBM=0.1 RE=0.00042229 RC=0.0571128 XTB=1.12257 XTI=1.22158 EG=1.206 CJE=1e-09</text>
<text x="9.0" y="929.4">.MODEL LEDrot D (IS=93.2P RS=42M N=3.73 BV=4 IBV=10U CJO=2.97P VJ=.75 M=.333 TT=4.32U type=LED) ; *</text>
</g>
<g stroke="#1616d6" fill="none" stroke-width="1.2"><path d="M0 479.5H4.2"/><path d="M4.3 474.5V484.5" stroke-width="1.9"/><path d="M4.6 478.3L10 472.2"/><path d="M4.6 481.5L10.6 487.6"/><path d="M7.6 484.2L9.6 486.9L6.9 485.9Z" fill="#1616d6"/></g>
<text x="18.0" y="485.0" font-family='"Liberation Sans", sans-serif' font-size="12.2px" textLength="108.4" lengthAdjust="spacingAndGlyphs" fill="#10141f" opacity="0.999">723netz5kaskode.asc</text>
<defs><linearGradient id="bg1" x1="0" y1="0" x2="0" y2="1"><stop offset="0" stop-color="#c5d6ec"/><stop offset="0.48" stop-color="#b9cde6"/><stop offset="0.52" stop-color="#a3bcdb"/><stop offset="1" stop-color="#b4c9e3"/></linearGradient><linearGradient id="bg2" x1="0" y1="0" x2="0" y2="1"><stop offset="0" stop-color="#e9a99a"/><stop offset="0.48" stop-color="#d9806e"/><stop offset="0.52" stop-color="#c4452c"/><stop offset="1" stop-color="#d2674c"/></linearGradient></defs>
<rect x="825.5" y="472.5" width="30" height="16" rx="2" fill="url(#bg1)" stroke="#5d7394" stroke-width="1"/>
<rect x="858.5" y="472.5" width="30" height="16" rx="2" fill="url(#bg1)" stroke="#5d7394" stroke-width="1"/>
<rect x="891.5" y="472.5" width="30" height="16" rx="2" fill="url(#bg2)" stroke="#5a2a25" stroke-width="1"/>
<rect x="836" y="480.6" width="9.5" height="3.2" fill="#fff" stroke="#4a5568" stroke-width="0.8"/>
<rect x="868.3" y="476.6" width="10.5" height="8.1" rx="0.8" fill="#414b5c"/>
<rect x="869.1" y="477.4" width="8.9" height="6.5" fill="#fafbfd"/>
<rect x="870.9" y="478.9" width="5.4" height="3.4" fill="#414b5c"/>
<rect x="871.6" y="479.6" width="4.0" height="2.0" fill="#a9c0de"/>
<path d="M902.3 476.8L910 484M910 476.8L902.3 484" stroke="#4a2a2a" stroke-width="4.2" fill="none"/>
<path d="M902.3 476.8L910 484M910 476.8L902.3 484" stroke="#fff" stroke-width="2.6" fill="none"/>
<defs><linearGradient id="sb" x1="0" y1="0" x2="1" y2="0"><stop offset="0" stop-color="#f6f6f6"/><stop offset="1" stop-color="#c4c4c4"/></linearGradient></defs>
<rect x="905" y="494" width="13" height="432" fill="#eeeeee"/>
<rect x="905" y="494" width="1.2" height="432" fill="#fdfdfd"/>
<rect x="906.6" y="512.4" width="16" height="392" rx="1.2" fill="url(#sb)" stroke="#8e8e8e" stroke-width="1"/>
<path d="M910.8 918.3H918.4L914.6 922.2Z" fill="#3a3a3a"/>
<path d="M910.6 504.8L914.5 500.9L918.4 504.8Z" fill="#3a3a3a"/>
<path d="M910.3 705.5H918" stroke="#606060" stroke-width="1"/>
<path d="M910.3 708.5H918" stroke="#606060" stroke-width="1"/>
<path d="M910.3 711.5H918" stroke="#606060" stroke-width="1"/>
</svg>
</body></html>
